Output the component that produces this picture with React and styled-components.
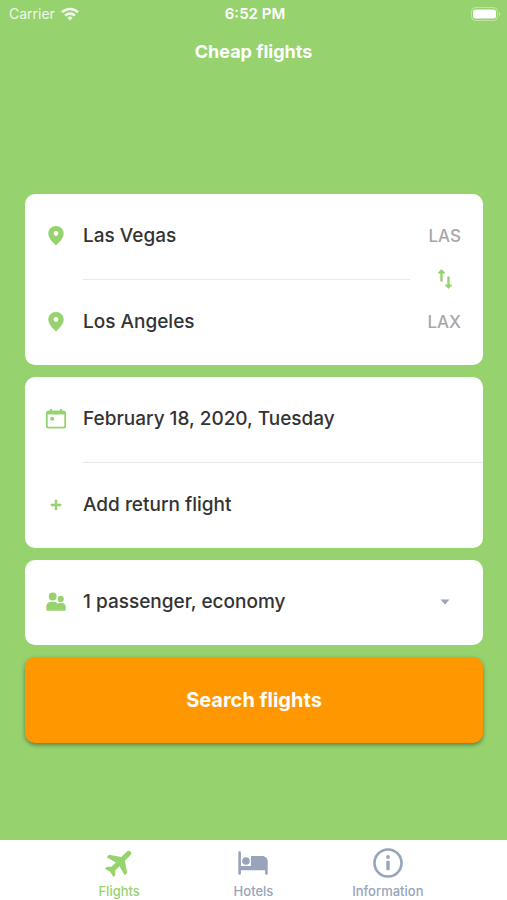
import React, { useState } from 'react';
import styled, { createGlobalStyle } from 'styled-components';

const green = '#96d36e';
const slate = '#98a4bb';

const GlobalStyle = createGlobalStyle`
  * {
    box-sizing: border-box;
  }

  body {
    margin: 0;
    background: ${green};
    font-family: Inter, 'Liberation Sans', sans-serif;
  }

  button,
  input,
  select {
    font: inherit;
    color: inherit;
    border: none;
    background: none;
    padding: 0;
    margin: 0;
  }
`;

const Screen = styled.div`
  display: flex;
  flex-direction: column;
  min-height: 100vh;
  background: ${green};
  color: #fff;
`;

const StatusBar = styled.div`
  display: grid;
  grid-template-columns: 1fr auto 1fr;
  align-items: center;
  height: 28px;
  padding: 0 6px 0 9px;
  font-size: 14px;
  line-height: 20px;
`;

const Carrier = styled.div`
  display: flex;
  align-items: center;
  gap: 6px;
  opacity: 0.85;
`;

const Clock = styled.div`
  font-size: 15px;
  font-weight: 600;
`;

const Battery = styled.svg`
  justify-self: end;
`;

const Header = styled.header`
  height: 48px;
  text-align: center;
`;

const Title = styled.h1`
  margin: 0;
  font-size: 18px;
  line-height: 48px;
  font-weight: 700;
`;

const Form = styled.form`
  display: flex;
  flex: 1;
  flex-direction: column;
  justify-content: center;
  gap: 12px;
  padding: 20px 24px 0 25px;
`;

const Card = styled.section`
  border-radius: 10px;
  background: #fff;
  color: #333;
`;

const Row = styled.div`
  display: flex;
  align-items: center;
  height: 85px;
  font-size: 19px;
  line-height: 24px;
  font-weight: 500;
`;

const RowIcon = styled.label`
  display: flex;
  flex: 0 0 58px;
  padding-left: 19px;
  color: ${green};
`;

const TextInput = styled.input`
  flex: 1;
  min-width: 0;
  outline: none;
`;

const RowButton = styled.button`
  flex: 1;
  height: 100%;
  text-align: left;
  cursor: pointer;
`;

const Select = styled.select`
  flex: 1;
  min-width: 0;
  appearance: none;
  outline: none;
`;

const AirportCode = styled.span`
  padding-right: 22px;
  color: #a8a8a8;
  font-size: 17px;
`;

const Caret = styled.svg`
  margin-right: 33px;
  pointer-events: none;
`;

const Divider = styled.div`
  display: flex;
  align-items: center;
  height: 1px;
  padding-left: 58px;
  padding-right: ${(props) => (props.$inset ? '3px' : '0')};

  &::before {
    content: '';
    flex: 1;
    height: 1px;
    background: #e9e9e9;
  }
`;

const SwapButton = styled.button`
  display: flex;
  justify-content: center;
  width: 70px;
  color: ${green};
  cursor: pointer;
`;

const SearchButton = styled.button`
  height: 86px;
  border-radius: 10px;
  background: #ff9800;
  box-shadow: 0 2px 4px rgba(0, 0, 0, 0.4);
  font-size: 20px;
  line-height: 24px;
  font-weight: 700;
  cursor: pointer;
`;

const TabBar = styled.nav`
  display: flex;
  height: 60px;
  padding: 0 52px;
  background: #fff;
`;

const Tab = styled.a`
  display: flex;
  flex: 1;
  flex-direction: column;
  align-items: center;
  gap: 4px;
  padding-top: 8px;
  color: ${(props) => (props.$active ? green : slate)};
  font-size: 13px;
  line-height: 18px;
  font-weight: 500;
  text-decoration: none;
`;

const WifiIcon = () => (
  <svg width="18" height="14" viewBox="0 0 18 14" fill="none" stroke="#fff" strokeWidth="2.6">
    <path d="M1 5.2a11.6 11.6 0 0 1 16 0" />
    <path d="M4.1 8.6a7 7 0 0 1 9.8 0" />
    <path d="M9 13.6 6.3 10.9a3.9 3.9 0 0 1 5.4 0z" fill="#fff" stroke="none" />
  </svg>
);

const BatteryIcon = () => (
  <Battery width="30" height="14" viewBox="0 0 30 14">
    <rect x="0.5" y="0.5" width="26" height="13" rx="4" fill="none" stroke="#fff" strokeOpacity="0.4" />
    <rect x="2" y="2.5" width="23" height="9" rx="2.5" fill="#fff" />
    <path d="M28 5c1.6.6 1.6 3.4 0 4z" fill="#fff" fillOpacity="0.5" />
  </Battery>
);

const PinIcon = () => (
  <svg width="24" height="24" viewBox="0 0 24 24" fill="currentColor">
    <path
      fillRule="evenodd"
      d="M12 2C7.7 2 4.3 5.3 4.3 9.5c0 4.8 4.7 9 7.7 12 3-3 7.7-7.2 7.7-12C19.7 5.3 16.3 2 12 2zm0 5.100a2.400 2.400 0 1 1 0 4.800 2.400 2.400 0 0 1 0-4.800z"
    />
  </svg>
);

const SwapIcon = () => (
  <svg width="20" height="24" viewBox="0 0 20 24" fill="none" stroke="currentColor" strokeWidth="2.4">
    <path d="M6.5 14.5V4M13.500 9.500v10" />
    <path d="M3.500 6 6.500 3l3 3zM10.500 18l3 3 3-3z" fill="currentColor" strokeWidth="1.200" strokeLinejoin="round" />
  </svg>
);

const CalendarIcon = () => (
  <svg width="24" height="24" viewBox="0 0 24 24" fill="currentColor">
    <path
      fillRule="evenodd"
      d="M6 2h2v1.500h8V2h2v1.500h1.500A2.500 2.500 0 0 1 22 6v13.500a2 2 0 0 1-2 2H4a2 2 0 0 1-2-2V6a2.500 2.500 0 0 1 2.500-2.500H6zM3.700 7.500v11.300a1 1 0 0 0 1 1h14.600a1 1 0 0 0 1-1V7.500z"
    />
    <circle cx="8.200" cy="11.700" r="2" />
  </svg>
);

const PlusIcon = () => (
  <svg width="24" height="24" viewBox="0 0 24 24" fill="none" stroke="currentColor" strokeWidth="2.400">
    <path d="M6.700 12h10.600M12 6.700v10.600" />
  </svg>
);

const PeopleIcon = () => (
  <svg width="24" height="24" viewBox="0 0 24 24" fill="currentColor">
    <circle cx="8.700" cy="6.500" r="3.900" />
    <circle cx="16.700" cy="8.900" r="3.100" />
    <path d="M2.200 19.300v-2.200c0-3 2.200-5.300 5-5.300h2.300c2 0 3.400.9 4.300 2.200.8-.8 1.800-1.200 2.900-1.200h.7c2.500 0 4.400 2 4.400 4.400v2.100c0 .9-.6 1.500-1.500 1.500H3.700c-.9 0-1.500-.6-1.500-1.500z" />
  </svg>
);

const PlaneIcon = () => (
  <svg width="30" height="30" viewBox="0 0 30 30" fill="currentColor">
    <path
      transform="rotate(45 15 15) translate(-.6 -1.600) scale(1.300)"
      d="M21.800 16.400v-2.700L14 8.300V2.400C14 1.100 13.100.200 12 .200s-2 .9-2 2.200v5.900l-7.800 5.400v2.700l7.800-2.200v4.700L7.400 21.400v2.100l4.600-1.200 4.600 1.200v-2.100L14 18.900v-4.700z"
    />
  </svg>
);

const BedIcon = () => (
  <svg width="30" height="30" viewBox="0 0 30 30" fill="currentColor">
    <path d="M.300 4.500a1.300 1.300 0 0 1 2.600 0V18h10V9.200c0-.8.500-1.300 1.300-1.300H24c3.300 0 5.700 2.300 5.700 5.500v12a1.300 1.300 0 0 1-2.600 0v-3.200H2.900v3.200a1.300 1.300 0 0 1-2.600 0z" />
    <circle cx="8" cy="13" r="3.800" />
  </svg>
);

const InfoIcon = () => (
  <svg width="30" height="30" viewBox="0 0 30 30" fill="currentColor">
    <circle cx="15" cy="15" r="13.500" fill="none" stroke="currentColor" strokeWidth="2.600" />
    <circle cx="15" cy="9" r="1.900" />
    <rect x="13.300" y="12.700" width="3.400" height="9.500" rx="1" />
  </svg>
);

const tabs = [
  { name: 'Flights', Icon: PlaneIcon },
  { name: 'Hotels', Icon: BedIcon },
  { name: 'Information', Icon: InfoIcon },
];

const App = () => {
  const [from, setFrom] = useState({ city: 'Las Vegas', code: 'LAS' });
  const [to, setTo] = useState({ city: 'Los Angeles', code: 'LAX' });

  const swap = () => {
    setFrom(to);
    setTo(from);
  };

  return (
    <Screen>
      <GlobalStyle />
      <StatusBar>
        <Carrier>
          Carrier
          <WifiIcon />
        </Carrier>
        <Clock>6:52 PM</Clock>
        <BatteryIcon />
      </StatusBar>
      <Header>
        <Title>Cheap flights</Title>
      </Header>

      <Form onSubmit={(e) => e.preventDefault()}>
        <Card>
          <Row>
            <RowIcon htmlFor="from" aria-label="From">
              <PinIcon />
            </RowIcon>
            <TextInput id="from" value={from.city} onChange={(e) => setFrom({ ...from, city: e.target.value })} />
            <AirportCode>{from.code}</AirportCode>
          </Row>
          <Divider $inset>
            <SwapButton type="button" aria-label="Swap cities" onClick={swap}>
              <SwapIcon />
            </SwapButton>
          </Divider>
          <Row>
            <RowIcon htmlFor="to" aria-label="To">
              <PinIcon />
            </RowIcon>
            <TextInput id="to" value={to.city} onChange={(e) => setTo({ ...to, city: e.target.value })} />
            <AirportCode>{to.code}</AirportCode>
          </Row>
        </Card>

        <Card>
          <Row>
            <RowIcon htmlFor="date" aria-label="Departure date">
              <CalendarIcon />
            </RowIcon>
            <TextInput id="date" defaultValue="February 18, 2020, Tuesday" />
          </Row>
          <Divider />
          <Row>
            <RowIcon htmlFor="return">
              <PlusIcon />
            </RowIcon>
            <RowButton id="return" type="button">
              Add return flight
            </RowButton>
          </Row>
        </Card>

        <Card>
          <Row>
            <RowIcon htmlFor="passengers" aria-label="Passengers">
              <PeopleIcon />
            </RowIcon>
            <Select id="passengers">
              <option>1 passenger, economy</option>
            </Select>
            <Caret width="10" height="6" viewBox="0 0 10 6" fill={slate}>
              <path d="M.5.500h9L5 5.500z" />
            </Caret>
          </Row>
        </Card>

        <SearchButton type="submit">Search flights</SearchButton>
      </Form>

      <TabBar>
        {tabs.map(({ name, Icon }, i) => (
          <Tab key={name} href={`#${name.toLowerCase()}`} $active={i === 0}>
            <Icon />
            {name}
          </Tab>
        ))}
      </TabBar>
    </Screen>
  );
};

export default App;
